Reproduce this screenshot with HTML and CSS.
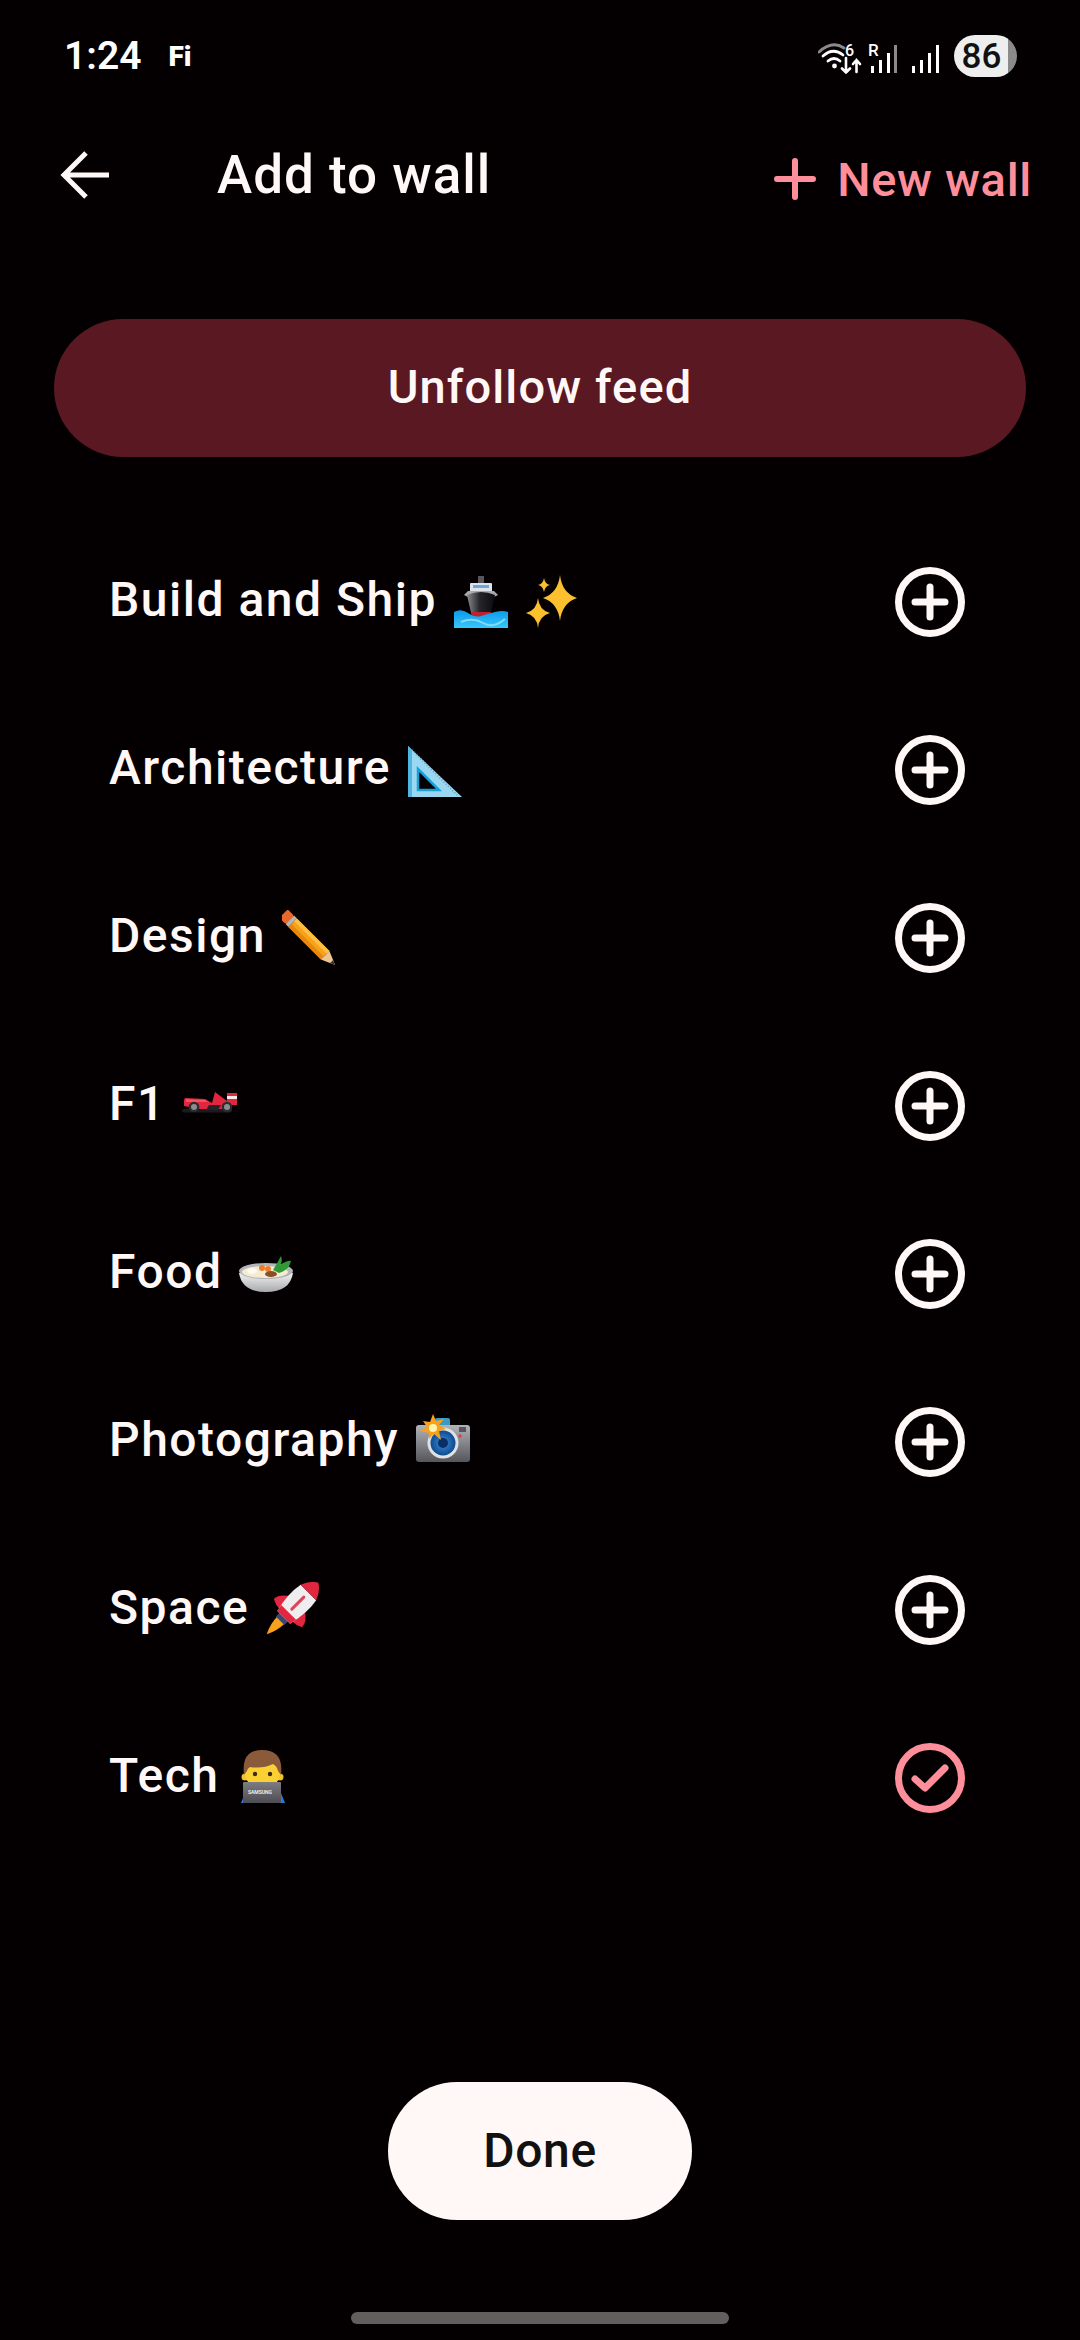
FILE: index.html
```html
<!doctype html>
<html>

<head>
    <meta charset="utf-8">
    <meta name="viewport" content="width=device-width, initial-scale=1">
    <title>Add to wall</title>
    <link rel="stylesheet" href="styles.css">
</head>

<body>
    <div class="page">
        <div class="status">
            <span class="time">1:24</span>
            <span class="fi">Fi</span>
            <svg class="signals" width="125" height="36" viewBox="0 0 125 36">
                <g fill="none" stroke-linecap="round" stroke-width="2.800">
                    <path d="M1 14Q14 2 26 10" stroke="#8a8a8a" />
                    <path d="M5 18Q15 9 25 17" stroke="#fff" />
                    <path d="M10 23Q16 18 22 23" stroke="#fff" />
                    <path d="M28 20V34.500M24 30.500l4 4 4-4" stroke="#fff" stroke-width="2.600" />
                    <path d="M38.500 34V22M35 26l3.500-4 3.500 4" stroke="#fff" stroke-width="2.600" />
                </g>
                <circle cx="16.500" cy="28" r="2.400" fill="#fff" />
                <text class="sig-text" x="27" y="18" font-size="16">6</text>
                <text class="sig-text" x="50" y="18" font-size="17">R</text>
                <g fill="#fff">
                    <rect x="53" y="28" width="3" height="7" />
                    <rect x="61" y="22" width="3" height="13" />
                    <rect x="69" y="15" width="3" height="20" />
                    <rect x="76" y="7" width="3" height="28" fill="#8a8a8a" />
                    <rect x="94" y="28" width="3" height="7" />
                    <rect x="102" y="22" width="3" height="13" />
                    <rect x="110" y="15" width="3" height="20" />
                    <rect x="118" y="7" width="3" height="28" />
                </g>
            </svg>
            <span class="battery">86</span>
        </div>

        <div class="header">
            <svg class="back" width="52" height="52" viewBox="0 0 52 52" fill="none" stroke="#fff8f7" stroke-width="5">
                <path d="M50 26H5M27 4L5 26l22 22" />
            </svg>
            <span class="title">Add to wall</span>
            <span class="new-wall">
                <svg width="42" height="42" viewBox="0 0 42 42" stroke="#ff8e9b" stroke-width="6" stroke-linecap="round">
                    <path d="M21 3V39M3 21H39" />
                </svg>
                New wall
            </span>
        </div>

        <div class="unfollow">Unfollow feed</div>

        <div class="list">
            <div class="row">
                <span class="label">Build and Ship</span>
                <svg class="emoji" width="56" height="56" viewBox="0 0 56 56">
                    <defs>
                        <linearGradient id="hull" x1="0" x2="1" y1="0" y2="0">
                            <stop offset="0" stop-color="#8a8a90" />
                            <stop offset=".45" stop-color="#26262a" />
                            <stop offset="1" stop-color="#0c0c10" />
                        </linearGradient>
                        <linearGradient id="sea" x1="0" x2="0" y1="0" y2="1">
                            <stop offset="0" stop-color="#0c98ea" />
                            <stop offset="1" stop-color="#38c8fa" />
                        </linearGradient>
                    </defs>
                    <rect x="25" y="2" width="6" height="8" fill="#55575c" />
                    <rect x="17" y="9" width="22" height="9" rx="1" fill="#dfe4ea" />
                    <rect x="20" y="11" width="16" height="3" fill="#6fa6d6" />
                    <path d="M11 21L15 17H41L45 21L41 23H15Z" fill="#a8aaae" />
                    <path d="M14 21Q28 15 42 21L37 43H19Z" fill="url(#hull)" />
                    <path d="M18 38H38L36 44H20Z" fill="#c21f2c" />
                    <path d="M1 38Q8 34 15 39T28 42T42 38T55 38V54H1Z" fill="url(#sea)" />
                    <path d="M8 48Q20 43 30 49T52 45" fill="none" stroke="#7fdcfb" stroke-width="2" />
                </svg>
                <svg class="emoji" width="56" height="56" viewBox="0 0 56 56" fill="#fcc02e">
                    <path d="M35 1Q37 19 52 24Q37 29 35 47Q33 29 18 24Q33 19 35 1Z" />
                    <path d="M13 24Q14 36 25 39Q14 42 13 54Q12 42 1 39Q12 36 13 24Z" />
                    <path d="M19 4Q20 10 25 11Q20 12 19 18Q18 12 13 11Q18 10 19 4Z" />
                </svg>
            </div>
            <div class="row">
                <span class="label">Architecture</span>
                <svg class="emoji" width="56" height="56" viewBox="0 0 56 56">
                    <path d="M1 4V55H55ZM11 27L32 48H11Z" fill="#9ad8f2" fill-rule="evenodd" />
                    <path d="M11 27L32 48H11Z" fill="none" stroke="#1a9fd6" stroke-width="2.500" />
                    <path d="M1 4V55H5V9Z" fill="#4fb6e2" />
                    <path d="M5 8L50 53" stroke="#6b9fb8" stroke-width="2" stroke-dasharray="1 2" />
                </svg>
            </div>
            <div class="row">
                <span class="label">Design</span>
                <svg class="emoji" width="56" height="56" viewBox="0 0 56 56">
                    <g transform="translate(5 7) rotate(45)">
                        <rect x="-5" y="-6" width="9" height="12" rx="2" fill="#e9672b" />
                        <rect x="4" y="-6" width="4" height="12" fill="#b5b5b5" />
                        <rect x="8" y="-6" width="46" height="12" fill="#f9a11b" />
                        <rect x="8" y="-6" width="46" height="4" fill="#fdc042" />
                        <rect x="8" y="2" width="46" height="4" fill="#e58710" />
                        <path d="M54-6L68 0L54 6Z" fill="#eec48f" />
                        <path d="M63-2L68 0L63 2Z" fill="#333" />
                    </g>
                </svg>
            </div>
            <div class="row">
                <span class="label">F1</span>
                <svg class="emoji" width="56" height="56" viewBox="0 0 56 56">
                    <rect x="0" y="31" width="50" height="3.500" rx="1.700" fill="#1b1a1f" />
                    <path d="M2 22L3 20L23 21L30 25L33 14L45 23V15H55V27H46L40 31H18L2 28Z" fill="#e3263f" />
                    <path d="M4 21L23 22L26 24H4Z" fill="#f2535f" />
                    <rect x="45" y="18" width="10" height="3" fill="#f6e9ea" />
                    <path d="M27 27H39L36 32H24Z" fill="#26222a" />
                    <circle cx="12" cy="29" r="5.300" fill="#2c2c30" />
                    <circle cx="12" cy="29" r="3" fill="#8c8d92" />
                    <circle cx="45" cy="29" r="5.300" fill="#2c2c30" />
                    <circle cx="45" cy="29" r="3" fill="#8c8d92" />
                </svg>
            </div>
            <div class="row">
                <span class="label">Food</span>
                <svg class="emoji" width="56" height="56" viewBox="0 0 56 56">
                    <defs>
                        <linearGradient id="bowl" x1="0" x2="0" y1="0" y2="1">
                            <stop offset="0" stop-color="#f2f2f2" />
                            <stop offset="1" stop-color="#a8a9ac" />
                        </linearGradient>
                    </defs>
                    <path d="M1 27Q4 46 28 46Q52 46 55 27Z" fill="url(#bowl)" />
                    <ellipse cx="28" cy="25" rx="27" ry="8" fill="#b4b5b8" />
                    <ellipse cx="27" cy="26" rx="23" ry="6" fill="#f5ead2" />
                    <circle cx="24" cy="22" r="3" fill="#ed7d2c" />
                    <circle cx="30" cy="23" r="3" fill="#ed7d2c" />
                    <ellipse cx="33" cy="28" rx="6" ry="3" fill="#8a4f24" />
                    <ellipse cx="14" cy="25" rx="5" ry="3" fill="#fdfbef" />
                    <path d="M35 24Q40 16 43 10Q45 16 42 19Q50 14 53 15Q51 24 41 27Z" fill="#2f9a34" />
                </svg>
            </div>
            <div class="row">
                <span class="label">Photography</span>
                <svg class="emoji" width="56" height="56" viewBox="0 0 56 56">
                    <defs>
                        <linearGradient id="cam" x1="0" x2="0" y1="0" y2="1">
                            <stop offset="0" stop-color="#b2b3b8" />
                            <stop offset="1" stop-color="#55565c" />
                        </linearGradient>
                        <radialGradient id="lens">
                            <stop offset="0" stop-color="#3f8fd8" />
                            <stop offset="1" stop-color="#0f4a8f" />
                        </radialGradient>
                    </defs>
                    <rect x="20" y="4" width="15" height="9" rx="2" fill="#3a9bc4" />
                    <rect x="1" y="11" width="54" height="37" rx="3" fill="url(#cam)" />
                    <rect x="44" y="13" width="7" height="5" fill="#55565c" />
                    <circle cx="45" cy="22" r="1.700" fill="#e23b45" />
                    <circle cx="28" cy="29" r="15.500" fill="#dfe1e4" />
                    <circle cx="28" cy="29" r="12.500" fill="url(#lens)" />
                    <circle cx="28" cy="29" r="5" fill="#0a2f66" />
                    <path d="M18 0L21 7L29 5L24 11L31 15L24 17L26 26L19 20L14 25L14 19L5 17L12 13L8 7L15 8Z" fill="#f9a11b" />
                    <circle cx="18" cy="14" r="4" fill="#fff3b0" />
                </svg>
            </div>
            <div class="row">
                <span class="label">Space</span>
                <svg class="emoji" width="56" height="56" viewBox="0 0 56 56">
                    <g transform="translate(30 24) rotate(-45)">
                        <path d="M-20-5Q-30-5-40 0Q-30 5-20 5Z" fill="#f9a11b" />
                        <rect x="-21" y="-6" width="6" height="12" fill="#3d4670" />
                        <path d="M4-10Q-3-20-10-20Q-13-14-13-9Z" fill="#e3263f" />
                        <path d="M4 10Q-3 20-10 20Q-13 14-13 9Z" fill="#e3263f" />
                        <path d="M-16-9Q4-14 19-11V11Q4 14-16 9Z" fill="#eeeef0" />
                        <path d="M-16-9L-9-10.500V10.500L-16 9Z" fill="#e3263f" />
                        <path d="M19-11Q29-7 33 0Q29 7 19 11Z" fill="#e3263f" />
                        <rect x="-6" y="-1.500" width="20" height="3" rx="1.500" fill="#d9475a" />
                    </g>
                </svg>
            </div>
            <div class="row">
                <span class="label">Tech</span>
                <svg class="emoji" width="56" height="56" viewBox="0 0 56 56">
                    <defs>
                        <linearGradient id="laptop" x1="0" x2="0" y1="0" y2="1">
                            <stop offset="0" stop-color="#7c7c82" />
                            <stop offset="1" stop-color="#4c4c52" />
                        </linearGradient>
                    </defs>
                    <path d="M6 53L10 43H46L50 53Z" fill="#2e78d0" />
                    <circle cx="10" cy="27" r="3.500" fill="#f5c02e" />
                    <circle cx="45" cy="27" r="3.500" fill="#f5c02e" />
                    <rect x="10" y="10" width="35" height="26" rx="12" fill="#fbd033" />
                    <path d="M9 25Q6 0 27 0Q49 0 46 25L43 21Q42 16 38 14Q28 19 15 17Q12 19 12 21Z" fill="#8a5a3a" />
                    <circle cx="20" cy="24" r="2.200" fill="#3a2a1a" />
                    <circle cx="35" cy="24" r="2.200" fill="#3a2a1a" />
                    <rect x="8" y="32" width="38" height="21" rx="1" fill="url(#laptop)" />
                    <text class="sig-text" x="13" y="44" font-size="5" fill="#c4c4c8">SAMSUNG</text>
                </svg>
            </div>
        </div>

        <div class="footer">
            <div class="done">Done</div>
            <div class="home-bar"></div>
        </div>
    </div>

    <svg class="defs-hidden" width="0" height="0">
        <symbol id="add" viewBox="0 0 70 70">
            <circle cx="35" cy="35" r="31.500" fill="none" stroke="currentColor" stroke-width="7" />
            <path d="M35 20V50M20 35H50" fill="none" stroke="currentColor" stroke-width="7" stroke-linecap="round" />
        </symbol>
        <symbol id="added" viewBox="0 0 70 70">
            <circle cx="35" cy="35" r="31.500" fill="none" stroke="currentColor" stroke-width="7" />
            <path d="M20 36L30 45L50 25" fill="none" stroke="currentColor" stroke-width="7" stroke-linecap="round" stroke-linejoin="round" />
        </symbol>
    </svg>

    <script>
        // the round button at the end of each row, only the last wall is already picked
        let rows = document.querySelectorAll(".row");
        for (let i = 0; i < rows.length; i++) {
            let picked = i == rows.length - 1;
            let svg = document.createElementNS("http://www.w3.org/2000/svg", "svg");
            svg.setAttribute("class", picked ? "toggle toggle-on" : "toggle");
            svg.setAttribute("width", "70");
            svg.setAttribute("height", "70");
            let use = document.createElementNS("http://www.w3.org/2000/svg", "use");
            use.setAttribute("href", picked ? "#added" : "#add");
            svg.appendChild(use);
            rows[i].appendChild(svg);
        }
    </script>
</body>

</html>
```

FILE: styles.css
```css
* {
    box-sizing: border-box;
}
body {
    margin: 0;
    background-color: #040002;
    color: #fff8f7;
    font-family: 'Roboto', sans-serif;
}
.page {
    display: flex;
    flex-direction: column;
    height: 2340px;
    overflow: hidden;
}
.status {
    display: flex;
    align-items: center;
    height: 76px;
    margin-top: 18px;
    padding: 0 63px 0 64px;
}
.time {
    font-size: 39px;
    font-weight: 600;
    color: #fff;
}
.fi {
    margin-left: 27px;
    font-size: 28px;
    font-weight: 900;
    color: #fff;
}
.signals {
    margin-left: auto;
}
.sig-text {
    font-family: 'Roboto', sans-serif;
    font-weight: 500;
    fill: #fff;
}
.battery {
    display: flex;
    align-items: center;
    justify-content: center;
    width: 63px;
    height: 42px;
    margin-left: 11px;
    padding-right: 8px;
    border-radius: 21px;
    background: linear-gradient(90deg, #eeeeee 54px, #8a8a8a 54px);
    color: #111;
    font-size: 35px;
    font-weight: 500;
}
.header {
    display: flex;
    align-items: center;
    height: 100px;
    margin-top: 31px;
    padding: 0 48px 0 59px;
}
.title {
    margin-left: 106px;
    font-size: 53px;
    font-weight: 500;
    letter-spacing: 1px;
}
.new-wall {
    display: flex;
    align-items: center;
    gap: 21px;
    margin-left: auto;
    padding-top: 8px;
    color: #ff8e9b;
    font-size: 47px;
    font-weight: 550;
    letter-spacing: 0.7px;
}
.unfollow {
    display: flex;
    align-items: center;
    justify-content: center;
    height: 138px;
    margin: 94px 54px 0;
    padding-bottom: 4px;
    border-radius: 69px;
    background-color: #5a1822;
    font-size: 47px;
    font-weight: 480;
    letter-spacing: 1.1px;
}
.list {
    margin-top: 61px;
    padding: 0 115px 0 109px;
}
.row {
    display: flex;
    align-items: center;
    gap: 16px;
    height: 168px;
}
.label {
    padding-bottom: 6px;
    font-size: 48px;
    font-weight: 500;
    letter-spacing: 1.5px;
}
.toggle {
    margin-left: auto;
    color: #fff8f7;
}
.toggle-on {
    color: #ff8e9b;
}
.footer {
    display: flex;
    flex-direction: column;
    align-items: center;
    margin-top: auto;
    padding-bottom: 16px;
}
.done {
    display: flex;
    align-items: center;
    justify-content: center;
    width: 304px;
    height: 138px;
    padding-bottom: 2px;
    border-radius: 69px;
    background-color: #fff8f7;
    color: #111;
    font-size: 48px;
    font-weight: 480;
    letter-spacing: 0.6px;
}
.home-bar {
    width: 378px;
    height: 12px;
    margin-top: 92px;
    border-radius: 6px;
    background-color: #625e5e;
}
.defs-hidden {
    display: block;
    height: 0;
}
```
